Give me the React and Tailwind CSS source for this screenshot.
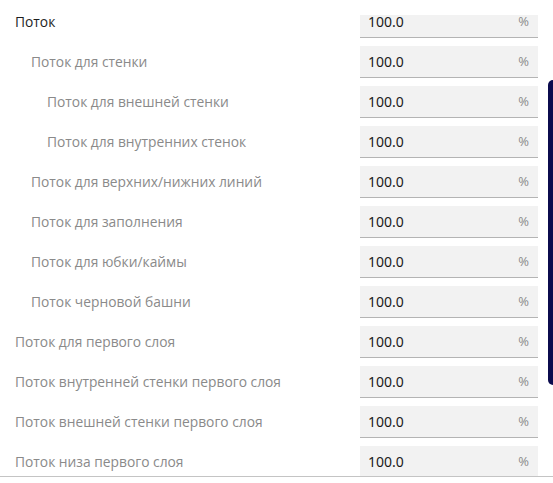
import React from "react";

const rows = [
  { label: "Поток", level: 0, dark: true },
  { label: "Поток для стенки", level: 1 },
  { label: "Поток для внешней стенки", level: 2 },
  { label: "Поток для внутренних стенок", level: 2 },
  { label: "Поток для верхних/нижних линий", level: 1 },
  { label: "Поток для заполнения", level: 1 },
  { label: "Поток для юбки/каймы", level: 1 },
  { label: "Поток черновой башни", level: 1 },
  { label: "Поток для первого слоя", level: 0 },
  { label: "Поток внутренней стенки первого слоя", level: 0 },
  { label: "Поток внешней стенки первого слоя", level: 0 },
  { label: "Поток низа первого слоя", level: 0 },
];

const indent = ["pl-[15px]", "pl-[31px]", "pl-[47px]"];

export default function App() {
  return (
    <div className="relative w-[553px] h-[483px] bg-white overflow-hidden font-['Open_Sans',sans-serif]">
      <div className="h-[477px] border-b border-[#c4c4c4] overflow-hidden pt-[2px]">
        {rows.map((row, i) => (
          <div key={i} className="flex h-10 items-center">
            <div
              className={`flex-1 text-[13.8px] ${indent[row.level]} ${
                row.dark ? "text-[#1e1e1e]" : "text-[#8a8a8a]"
              }`}
            >
              {row.label}
            </div>
            <div
              className={`w-[178px] mr-[15px] flex items-center justify-between bg-[#f2f2f2] border-b border-[#b4b4b4] pl-2 pr-[9px] ${
                i === 0 ? "h-[23px] self-end mb-[4px] pb-[9px]" : "h-8"
              }`}
            >
              <span className="text-[14px] text-[#1a1a1a] font-['Noto_Sans',sans-serif]">
                100.0
              </span>
              <span className="text-[13px] text-[#8a8a8a]">%</span>
            </div>
          </div>
        ))}
      </div>
      <div className="absolute right-0 top-[80px] w-[5px] h-[305px] rounded-l-md bg-[#0b0b4e]" />
    </div>
  );
}
